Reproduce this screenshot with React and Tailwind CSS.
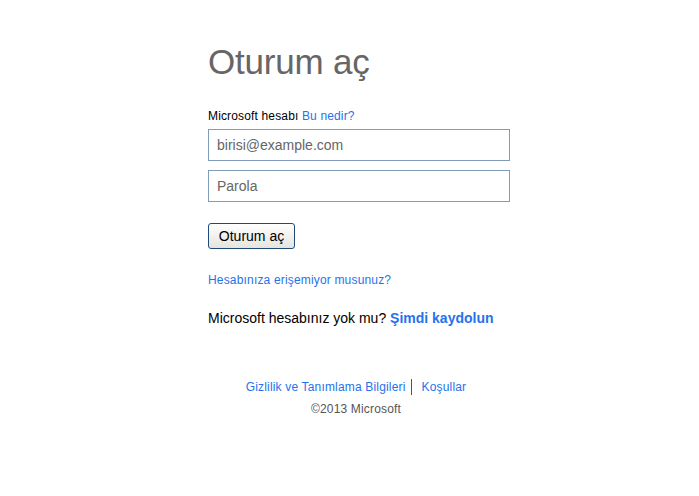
export default function App() {
  return (
    <div className="min-h-[496px] bg-white font-['Liberation_Sans',Arial,sans-serif]">
      <div className="ml-[208px] w-[302px] pt-[41px]">
        <h1 className="text-[35px] leading-[42px] text-[#666666] font-normal tracking-[-0.2px]">Oturum aç</h1>

        <div className="mt-[26px] text-[12px] leading-[14px] text-black tracking-[0.15px]">
          Microsoft hesabı <a href="#" className="text-[#2672ec]">Bu nedir?</a>
        </div>

        <input
          type="text"
          placeholder="birisi@example.com"
          className="mt-[6px] block w-[302px] h-[32px] border border-[#7f9db9] px-[8px] text-[14px] text-[#333] placeholder:text-[#666666] outline-none"
        />
        <input
          type="password"
          placeholder="Parola"
          className="mt-[9px] block w-[302px] h-[32px] border border-[#7f9db9] px-[8px] text-[14px] text-[#333] placeholder:text-[#666666] outline-none"
        />

        <button className="mt-[21px] block w-[87px] h-[26px] rounded-[3px] border border-[#1e4c7a] bg-gradient-to-b from-white to-[#e6e4dc] text-[14px] text-black">
          Oturum aç
        </button>

        <a href="#" className="mt-[24px] block text-[12px] leading-[14px] text-[#2672ec] tracking-[0.17px]">
          Hesabınıza erişemiyor musunuz?
        </a>

        <div className="mt-[23px] text-[14px] leading-[16px] text-black">
          Microsoft hesabınız yok mu?{" "}
          <a href="#" className="font-bold text-[#2672ec]">Şimdi kaydolun</a>
        </div>
      </div>

      <div className="mt-[53px] flex flex-col items-center pl-[13px] text-[12px] leading-[14px] tracking-[0.17px]">
        <div className="flex items-center">
          <a href="#" className="text-[#2672ec]">Gizlilik ve Tanımlama Bilgileri</a>
          <span className="ml-[5px] mr-[10px] h-[16px] w-0 border-l border-[#555555]" />
          <a href="#" className="text-[#2672ec]">Koşullar</a>
        </div>
        <div className="mt-[7px] text-[#555555]">©2013 Microsoft</div>
      </div>
    </div>
  );
}
